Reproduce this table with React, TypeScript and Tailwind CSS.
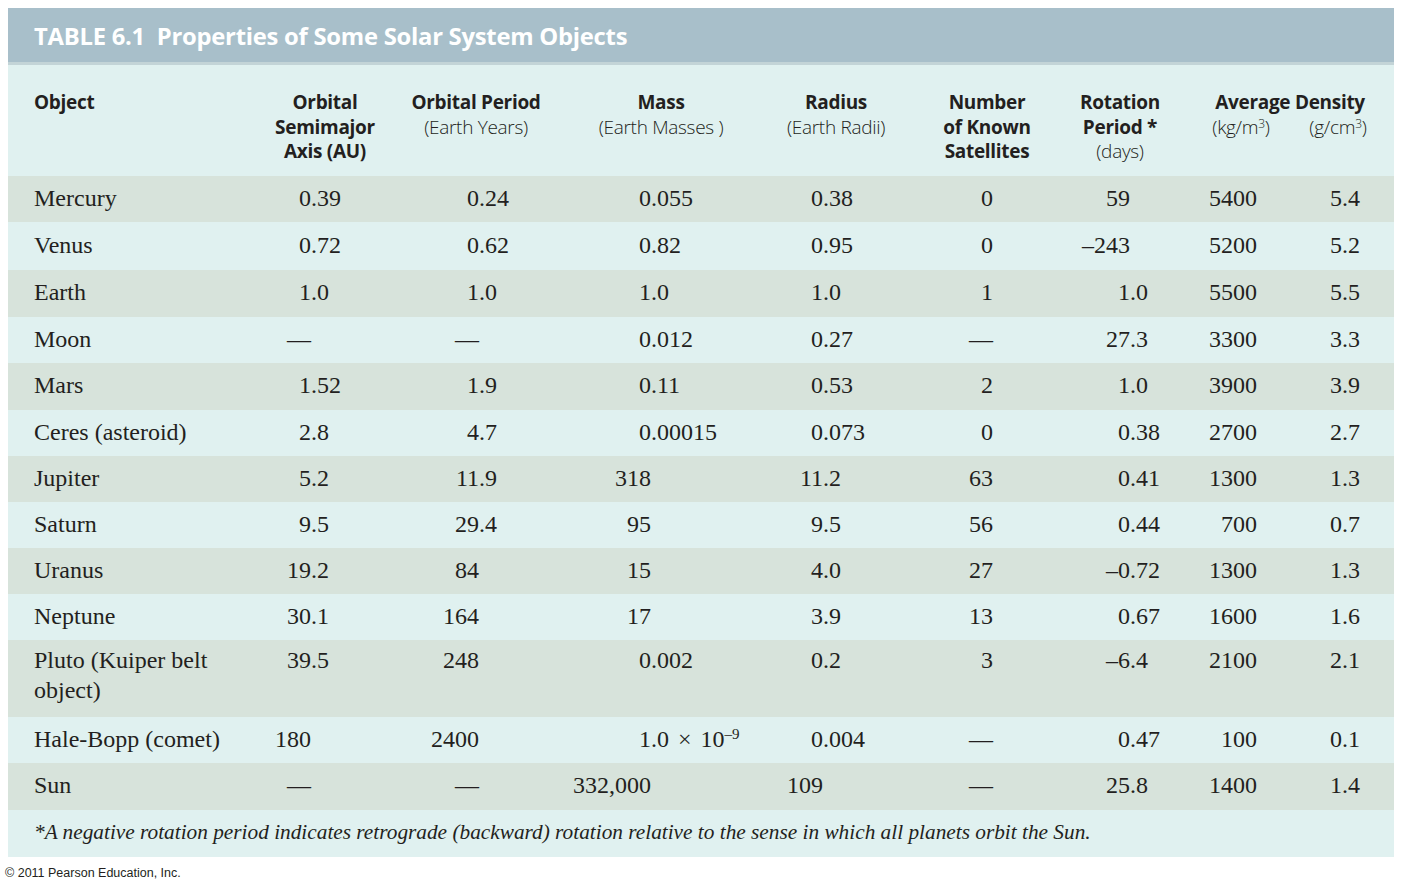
import type { ReactNode } from 'react';

type Row = {
  name: string;
  h: string;
  tall?: boolean;
  cells: ReactNode[];
};

const rows: Row[] = [
  { name: 'Mercury', h: 'h-[46px]', cells: ['0.39', '0.24', '0.055', '0.38', '0', '59', '5400', '5.4'] },
  { name: 'Venus', h: 'h-[48px]', cells: ['0.72', '0.62', '0.82', '0.95', '0', '–243', '5200', '5.2'] },
  { name: 'Earth', h: 'h-[47px]', cells: ['1.0', '1.0', '1.0', '1.0', '1', '1.0', '5500', '5.5'] },
  { name: 'Moon', h: 'h-[46px]', cells: ['—', '—', '0.012', '0.27', '—', '27.3', '3300', '3.3'] },
  { name: 'Mars', h: 'h-[47px]', cells: ['1.52', '1.9', '0.11', '0.53', '2', '1.0', '3900', '3.9'] },
  { name: 'Ceres (asteroid)', h: 'h-[46px]', cells: ['2.8', '4.7', '0.00015', '0.073', '0', '0.38', '2700', '2.7'] },
  { name: 'Jupiter', h: 'h-[46px]', cells: ['5.2', '11.9', '318', '11.2', '63', '0.41', '1300', '1.3'] },
  { name: 'Saturn', h: 'h-[46px]', cells: ['9.5', '29.4', '95', '9.5', '56', '0.44', '700', '0.7'] },
  { name: 'Uranus', h: 'h-[46px]', cells: ['19.2', '84', '15', '4.0', '27', '–0.72', '1300', '1.3'] },
  { name: 'Neptune', h: 'h-[46px]', cells: ['30.1', '164', '17', '3.9', '13', '0.67', '1600', '1.6'] },
  { name: 'Pluto (Kuiper belt object)', h: 'h-[77px]', tall: true, cells: ['39.5', '248', '0.002', '0.2', '3', '–6.4', '2100', '2.1'] },
  { name: 'Hale-Bopp (comet)', h: 'h-[46px]', cells: ['180', '2400', 'SCI', '0.004', '—', '0.47', '100', '0.1'] },
  { name: 'Sun', h: 'h-[47px]', cells: ['—', '—', '332,000', '109', '—', '25.8', '1400', '1.4'] },
];

// width of the box holding the integer part, so decimals line up per column
const intWidths = ['w-[61px]', 'w-[79px]', 'w-[99px]', 'w-[53px]', 'w-[91px]', 'w-[58px]', 'w-[89px]', 'w-[52px]'];

const grid = 'grid grid-cols-[242px_150px_152px_218px_132px_170px_96px_122px_104px]';

function Num({ value, col }: { value: ReactNode; col: number }) {
  let int: ReactNode = value;
  let rest: ReactNode = null;
  if (value === 'SCI') {
    int = '1';
    rest = (
      <>
        .0 <span className="mx-[3px]">×</span> 10<sup className="text-[15px]">–9</sup>
      </>
    );
  } else if (typeof value === 'string' && value.includes('.')) {
    const i = value.indexOf('.');
    int = value.slice(0, i);
    rest = value.slice(i);
  }
  return (
    <div className="flex whitespace-nowrap">
      <span className={`${intWidths[col]} shrink-0 text-right`}>{int}</span>
      <span>{rest}</span>
    </div>
  );
}

function Bold({ children }: { children: ReactNode }) {
  return <div className="font-bold">{children}</div>;
}

function Light({ children }: { children: ReactNode }) {
  return <div className="font-light">{children}</div>;
}

export default function App() {
  return (
    <div className="min-h-screen bg-white pt-[8px]">
      <div className="ml-[8px] w-[1386px] text-[#231f20]">
        <div className="h-[57px] bg-[#a8bfca] border-b-[3px] border-[#c3d4d7] pl-[26px] flex items-center">
          <h1 className="font-['Open_Sans',sans-serif] font-bold text-[23.8px] text-white tracking-[-0.25px] pt-[4px]">
            TABLE 6.1&nbsp; Properties of Some Solar System Objects
          </h1>
        </div>

        <div className={`${grid} h-[111px] bg-[#e0f1f0] pt-[25px] font-['Open_Sans',sans-serif] text-[19px] leading-[24.5px] tracking-[-0.3px]`}>
          <div className="pl-[26px]">
            <Bold>Object</Bold>
          </div>
          <div className="text-center">
            <Bold>Orbital</Bold>
            <Bold>Semimajor</Bold>
            <Bold>Axis (AU)</Bold>
          </div>
          <div className="text-center">
            <Bold>Orbital Period</Bold>
            <Light>(Earth Years)</Light>
          </div>
          <div className="text-center">
            <Bold>Mass</Bold>
            <Light>(Earth Masses )</Light>
          </div>
          <div className="text-center">
            <Bold>Radius</Bold>
            <Light>(Earth Radii)</Light>
          </div>
          <div className="text-center">
            <Bold>Number</Bold>
            <Bold>of Known</Bold>
            <Bold>Satellites</Bold>
          </div>
          <div className="text-center">
            <Bold>Rotation</Bold>
            <Bold>Period *</Bold>
            <Light>(days)</Light>
          </div>
          <div className="col-span-2">
            <div className="text-center pl-[18px]">
              <Bold>Average Density</Bold>
            </div>
            <div className="grid grid-cols-[122px_104px]">
              <div className="text-center pl-[24px]">
                <Light>
                  (kg/m<sup className="text-[12px]">3</sup>)
                </Light>
              </div>
              <div className="text-center pr-[8px]">
                <Light>
                  (g/cm<sup className="text-[12px]">3</sup>)
                </Light>
              </div>
            </div>
          </div>
        </div>

        <div className="font-['Liberation_Serif','Times_New_Roman',serif] text-[24px] leading-[30px]">
          {rows.map((r, idx) => (
            <div
              key={r.name}
              className={`${grid} ${r.h} ${idx % 2 === 0 ? 'bg-[#d7e3db]' : 'bg-[#e0f1f0]'} ${r.tall ? 'items-start pt-[5px]' : 'items-center pb-[3px]'}`}
            >
              <div className="pl-[26px] pr-[20px]">{r.name}</div>
              {r.cells.map((c, i) => (
                <Num key={i} value={c} col={i} />
              ))}
            </div>
          ))}
          <div className="h-[47px] bg-[#e0f1f0] flex items-center pb-[3px] pl-[26px] italic text-[21.3px]">
            *A negative rotation period indicates retrograde (backward) rotation relative to the sense in which all planets orbit the Sun.
          </div>
        </div>
      </div>
      <div className="pl-[5px] pt-[9px] font-['Liberation_Sans',Arial,sans-serif] text-[12.5px] leading-[15px] text-[#231f20]">
        © 2011 Pearson Education, Inc.
      </div>
    </div>
  );
}
